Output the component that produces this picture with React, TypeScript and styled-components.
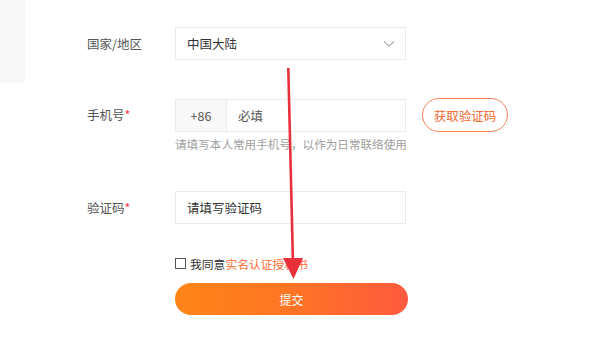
import React from 'react';
import styled, { createGlobalStyle } from 'styled-components';

const GlobalStyle = createGlobalStyle`
  html, body {
    margin: 0;
    padding: 0;
    background: #fff;
  }
  body {
    font-family: "Noto Sans CJK SC", "Noto Sans", "Liberation Sans", sans-serif;
    color: #333;
  }
`;

const Page = styled.div`
  position: relative;
  width: 600px;
  height: 362px;
  display: flex;
  align-items: flex-start;
  overflow: hidden;
`;

const SidePanel = styled.div`
  width: 25px;
  height: 83px;
  background: #f8f8f8;
  flex-shrink: 0;
`;

const Form = styled.div`
  display: flex;
  flex-direction: column;
  padding: 27px 0 0 62px;
`;

const Field = styled.div<{ $mt?: number }>`
  display: grid;
  grid-template-columns: 88px auto;
  align-items: start;
  margin-top: ${(p) => p.$mt || 0}px;
`;

const Label = styled.div`
  height: 33px;
  line-height: 33px;
  font-size: 12.5px;
  color: #555;
`;

const Star = styled.span`
  color: #f0364a;
`;

const Control = styled.div`
  display: flex;
  flex-direction: column;
`;

const ControlLine = styled.div`
  display: flex;
  align-items: center;
  gap: 16px;
`;

const Box = styled.div`
  box-sizing: border-box;
  width: 231px;
  height: 33px;
  border: 1px solid #ebebeb;
  display: flex;
  align-items: center;
  font-size: 12.5px;
  color: #333;
`;

const BoxText = styled.span`
  padding-left: 11px;
  flex: 1;
`;

const Chevron = styled.svg`
  margin-right: 10px;
`;

const Prefix = styled.div`
  width: 50px;
  height: 100%;
  background: #f8f8f8;
  border-right: 1px solid #ebebeb;
  display: flex;
  align-items: center;
  justify-content: center;
  color: #555;
  font-size: 12.5px;
`;

const Placeholder = styled.span`
  padding-left: 11px;
  color: #555;
`;

const OutlineButton = styled.button`
  box-sizing: border-box;
  width: 86px;
  height: 34px;
  border: 1px solid #f5845a;
  border-radius: 17px;
  background: #fff;
  color: #f26a35;
  font-family: inherit;
  font-size: 12.5px;
  padding: 0;
`;

const Hint = styled.div`
  margin-top: 4px;
  font-size: 11.6px;
  color: #a0a0a0;
`;

const Agree = styled.div`
  display: flex;
  align-items: center;
  margin-top: 31px;
  font-size: 11.8px;
  color: #333;
`;

const Check = styled.span`
  box-sizing: border-box;
  width: 11px;
  height: 11px;
  border: 1px solid #555;
  margin-right: 4px;
`;

const LinkText = styled.span`
  color: #ff6a2e;
`;

const Submit = styled.button`
  box-sizing: border-box;
  margin-top: 11px;
  width: 233px;
  height: 32px;
  border: none;
  border-radius: 16px;
  background: linear-gradient(90deg, #ff8518 0%, #ff7424 50%, #ff5a3f 100%);
  color: #fff;
  font-family: inherit;
  font-size: 12px;
  padding: 0;
`;

const Arrow = styled.svg`
  position: absolute;
  left: 0;
  top: 0;
  pointer-events: none;
`;

export default function App() {
  return (
    <>
      <GlobalStyle />
      <Page>
        <SidePanel />
        <Form>
          <Field>
            <Label>国家/地区</Label>
            <Box>
              <BoxText>中国大陆</BoxText>
              <Chevron width="12" height="8" viewBox="0 0 12 8">
                <path d="M1 1.5 L6 6 L11 1.5" fill="none" stroke="#aaa" strokeWidth="1.1" />
              </Chevron>
            </Box>
          </Field>

          <Field $mt={38}>
            <Label>
              手机号<Star>*</Star>
            </Label>
            <Control>
              <ControlLine>
                <Box>
                  <Prefix>+86</Prefix>
                  <Placeholder>必填</Placeholder>
                </Box>
                <OutlineButton>获取验证码</OutlineButton>
              </ControlLine>
              <Hint>请填写本人常用手机号，以作为日常联络使用</Hint>
            </Control>
          </Field>

          <Field $mt={39}>
            <Label>
              验证码<Star>*</Star>
            </Label>
            <Control>
              <Box>
                <BoxText>请填写验证码</BoxText>
              </Box>
              <Agree>
                <Check />
                我同意<LinkText>实名认证授权书</LinkText>
              </Agree>
              <Submit>提交</Submit>
            </Control>
          </Field>
        </Form>
        <Arrow width="600" height="362" viewBox="0 0 600 362">
          <path d="M287 68 L289.6 68 L294.2 260 L291.6 260 Z" fill="#e8303a" />
          <path d="M283 258 L303 258 L293.5 279 Z" fill="#e8303a" />
        </Arrow>
      </Page>
    </>
  );
}
